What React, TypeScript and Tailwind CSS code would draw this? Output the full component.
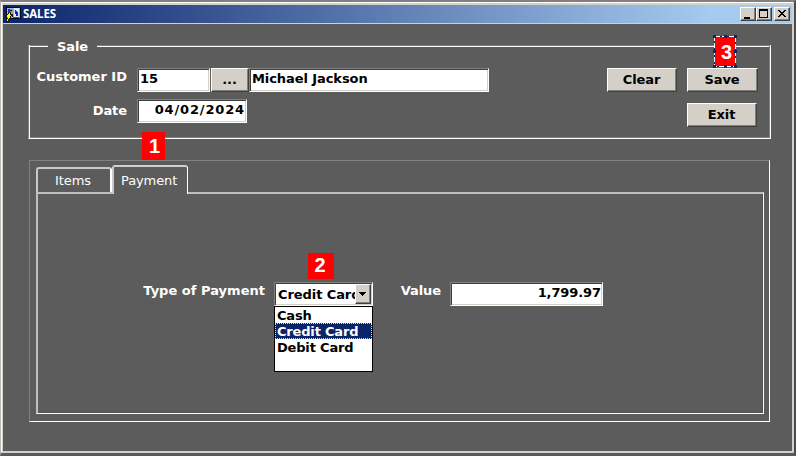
import React from "react";

const sunken =
  "bg-white border border-t-[#808080] border-l-[#808080] border-r-white border-b-white shadow-[inset_1px_1px_0_#404040,inset_-1px_-1px_0_#d4d0c8]";
const raised =
  "bg-[#d4d0c8] border border-t-white border-l-white border-r-[#404040] border-b-[#404040] shadow-[inset_-1px_-1px_0_#808080]";

function Field({ value, className }: { value: string; className: string }) {
  return (
    <div className={`${sunken} h-6 shrink-0 overflow-hidden whitespace-nowrap px-[2px] pt-[2px] leading-4 text-black ${className}`}>
      {value}
    </div>
  );
}

function Button({ children, className }: { children: React.ReactNode; className: string }) {
  return (
    <button className={`${raised} flex h-6 shrink-0 items-center justify-center pr-px pb-px font-bold text-black ${className}`}>
      {children}
    </button>
  );
}

function CaptionButton({ children, className = "" }: { children: React.ReactNode; className?: string }) {
  return (
    <button className={`${raised} h-[14px] w-[16px] ${className}`}>
      <svg width="14" height="12" viewBox="0 0 14 12" shapeRendering="crispEdges" className="block">
        {children}
      </svg>
    </button>
  );
}

function Badge({ n, className }: { n: number; className: string }) {
  return (
    <div className={`absolute flex items-center justify-center bg-[#ff0000] font-['Liberation_Sans',Arial,sans-serif] text-[20px] leading-none text-white ${className}`}>
      {n}
    </div>
  );
}

function AppIcon() {
  return (
    <svg width="16" height="16" viewBox="0 0 16 16" shapeRendering="crispEdges" className="block">
      <path d="M1 1h14v1h1v11H1z" fill="#080818" />
      <path d="M2 2h13v10H2z" fill="#8cb8f0" />
      <path d="M9 2h5v9H9z" fill="#d8ecff" />
      <path d="M3 3h3v2H5v4H3z" fill="#2438a8" />
      <path d="M10 4h1v1h1v1h1v4h-2V8h-1z" fill="#1020e0" />
      <path d="M5 3h3v1h1v2H8v1H6V6H5z" fill="#c88878" />
      <path d="M5 4h2v1H5zM7 8h1v3H7z" fill="#101028" />
      <path d="M5 6h1v2h1v2H6v2H5v1H4v2H3v1H1v-2h1v-2h1v-1H1V9h1V8h1V7h2z" fill="#181800" />
      <path d="M4 7h1v2h1v1H5v2H4v1H3v2H2v-2h1v-2H2V9h1V8h1z" fill="#ffff00" />
      <path d="M8 11h6v1H8z" fill="#3044c0" />
    </svg>
  );
}

const options = ["Cash", "Credit Card", "Debit Card"];

export default function App() {
  return (
    <div className="relative flex h-[456px] w-[796px] flex-col overflow-hidden border-t-2 border-r-2 border-b-[3px] border-l border-t-[#808080] border-r-[#4a4a4e] border-b-[#5a5a5e] border-l-[#b8b5ae] bg-[#5c5c5c] font-['DejaVu_Sans',Verdana,sans-serif] text-[13px] font-bold tracking-[-0.08px] text-white">
      <div className="flex min-h-0 flex-1 flex-col border-t border-r-2 border-b-2 border-l border-t-white border-r-[#d4d0c8] border-b-[#d4d0c8] border-l-white">
        <div className="flex min-h-0 flex-1 flex-col border-t-2 border-l border-[#d4d0c8]">
          <header className="flex h-[19px] shrink-0 items-center border-b border-[#d4d0c8] bg-[linear-gradient(90deg,#0a246a_0%,#a6caf0_90%)] pr-[2px] pl-[2px]">
            <AppIcon />
            <h1 className="ml-[2px] flex-1 font-['Noto_Sans',Tahoma,sans-serif] text-[11.5px] leading-4 tracking-[-0.1px]">SALES</h1>
            <CaptionButton>
              <path d="M3 9h6v2H3z" />
            </CaptionButton>
            <CaptionButton>
              <path d="M2 1h9v9H2zM3 3v6h7V3z" fillRule="evenodd" />
            </CaptionButton>
            <CaptionButton className="ml-[2px]">
              <path d="M3 2h2v1h1v1h2V3h1V2h2v1h-1v1H9v1H8v1h1v1h1v1h1v1H9V8H8V7H6v1H5v1H3V8h1V7h1V6h1V5H5V4H4V3H3z" />
            </CaptionButton>
          </header>

          <main className="flex flex-1 flex-col pt-[14px] pr-[21px] pl-[25px]">
            <section className="flex h-[101px] w-[743px] shrink-0 flex-col">
              <div className="flex h-4 shrink-0 items-end">
                <span className="mb-[7px] h-[2px] w-5 border-t border-b border-t-[#808080] border-b-white" />
                <h2 className="-mb-px w-[49px] pl-[9px] leading-4">Sale</h2>
                <span className="mb-[7px] h-[2px] flex-1 border-t border-b border-t-[#808080] border-b-white" />
              </div>
              <div className="-mt-[9px] flex flex-1 justify-between border-r border-b border-l border-r-white border-b-white border-l-[#808080] pt-[23px] pr-3 pl-[7px] shadow-[inset_1px_0_0_#fff,inset_-1px_-1px_0_#808080]">
                <div className="flex flex-col gap-[7px]">
                  <div className="flex">
                    <label className="w-[101px] pt-px pr-[10px] text-right leading-4 tracking-normal whitespace-nowrap">Customer ID</label>
                    <Field value="15" className="w-[73px]" />
                    <Button className="ml-px w-[38px]">...</Button>
                    <Field value="Michael Jackson" className="w-[240px]" />
                  </div>
                  <div className="flex">
                    <label className="w-[101px] pt-1 pr-[10px] text-right leading-4">Date</label>
                    <Field value="04/02/2024" className="w-[110px] pr-[1px]! text-right tracking-[0.85px]" />
                  </div>
                </div>
                <div className="flex gap-[10px]">
                  <Button className="w-[70px]">Clear</Button>
                  <div className="flex flex-col gap-[11px]">
                    <Button className="w-[71px]">Save</Button>
                    <Button className="w-[70px]">Exit</Button>
                  </div>
                </div>
              </div>
            </section>

            <section className="mt-[21px] ml-px flex h-[262px] w-[741px] shrink-0 flex-col border border-t-[#808080] border-r-white border-b-white border-l-[#808080] pt-1 pr-[5px] pb-[7px] pl-[6px]">
              <nav className="relative z-10 flex h-[27px] shrink-0 items-end text-[13px] font-normal tracking-[-0.1px]">
                <div className="h-[25px] w-[76px] rounded-t-[3px] border-t-2 border-r-2 border-l-2 border-t-[#c8c8c8] border-r-white border-l-[#c8c8c8] pt-1 pl-[17px] leading-4">
                  Items
                </div>
                <div className="-mb-[2px] h-[29px] w-[76px] rounded-t-[3px] border-t-2 border-r border-l-2 border-t-[#d0d0d0] border-r-white border-l-[#c8c8c8] bg-[#5c5c5c] pt-[6px] pl-[7px] leading-4">
                  Payment
                </div>
              </nav>
              <div className="flex flex-1 items-start border-t-2 border-r border-b border-l-2 border-t-[#c0c0c0] border-r-white border-b-white border-l-[#c0c0c0] pt-[88px] shadow-[inset_-1px_-1px_0_#505050]">
                <label className="ml-[105px] w-[131px] pt-px pr-[9px] text-right leading-4 tracking-[0.02px] whitespace-nowrap">Type of Payment</label>
                <div className="relative w-[99px]">
                  <div className={`${sunken} flex h-6 w-[99px] p-px`}>
                    <span className="min-w-0 flex-1 overflow-hidden pt-[3px] pl-[2px] leading-4 whitespace-nowrap text-black">Credit Card</span>
                    <button className={`${raised} flex h-5 w-4 shrink-0 items-center justify-center pr-px pb-px`}>
                      <svg width="7" height="4" shapeRendering="crispEdges">
                        <path d="M0 0h7v1H6v1H5v1H4v1H3V3H2V2H1V1H0z" />
                      </svg>
                    </button>
                  </div>
                  <ul className="absolute top-6 left-0 h-[66px] w-[99px] border border-black bg-white text-black tracking-[-0.18px]">
                    {options.map((o) => (
                      <li
                        key={o}
                        className={`h-4 border border-dotted pl-[1px] leading-4 whitespace-nowrap ${
                          o === "Credit Card" ? "border-[#f5db95] bg-[#0a246a] text-white" : "border-transparent"
                        }`}
                      >
                        {o}
                      </li>
                    ))}
                  </ul>
                </div>
                <label className="w-[77px] pt-px pr-[9px] text-right leading-4">Value</label>
                <Field value="1,799.97" className="w-[153px] pr-[1px]! text-right tracking-[-0.1px]" />
              </div>
            </section>
          </main>
        </div>
      </div>

      <Badge n={1} className="top-[130px] left-[141px] h-7 w-[23px] pl-[2px]" />
      <Badge n={2} className="top-[251px] left-[307px] h-[26px] w-[26px] pr-[2px] pb-[2px]" />
      <Badge n={3} className="top-[35px] left-[713px] h-[30px] w-[22px] pb-px pl-[3px]" />
      <svg width="25" height="34" className="absolute top-[33px] left-[711px]" shapeRendering="crispEdges">
        <rect x="2.5" y="1.5" width="21" height="30" fill="none" stroke="#0a246a" />
        <rect x="2.5" y="1.5" width="21" height="30" fill="none" stroke="#fff" strokeDasharray="5 2" />
        {[1, 12, 22].map((x) =>
          [0, 15, 30].map((y) => (x === 12 && y === 15 ? null : <rect key={`${x}-${y}`} x={x} y={y} width="3" height="3" fill="#0a246a" />)),
        )}
      </svg>
    </div>
  );
}
